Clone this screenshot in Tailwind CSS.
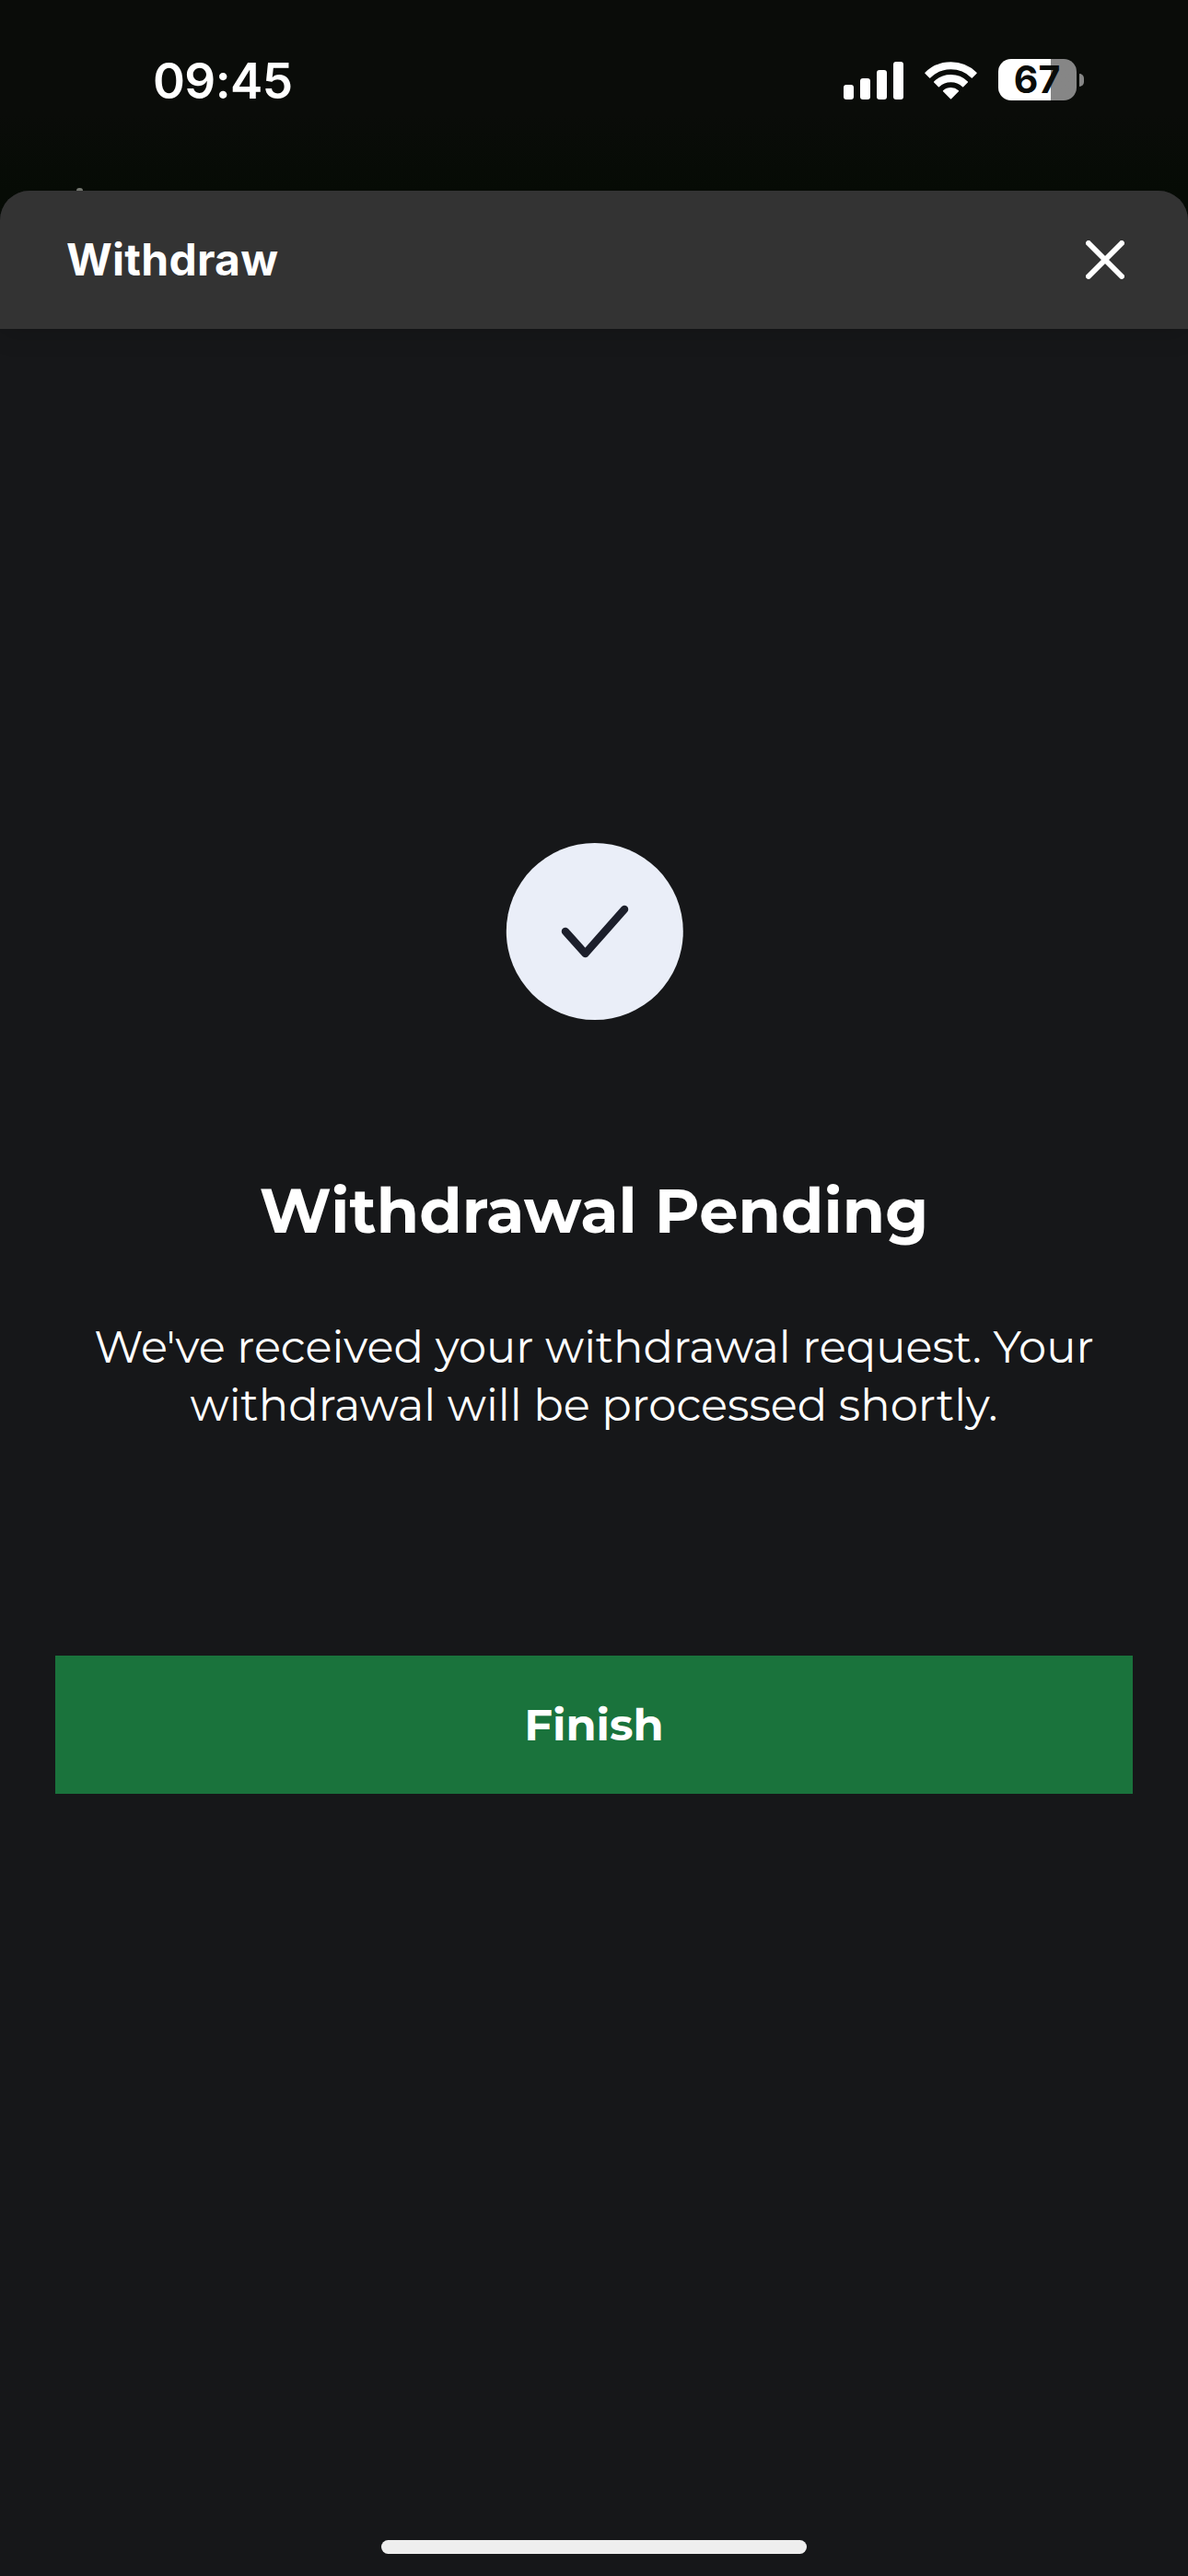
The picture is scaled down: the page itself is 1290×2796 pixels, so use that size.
<!doctype html>
<html lang="en">
<head>
  <meta charset="UTF-8" />
  <meta name="viewport" content="width=device-width, initial-scale=1.0" />
  <script src="https://cdn.jsdelivr.net/npm/@tailwindcss/browser@4"></script>
  <title>Withdraw</title>
</head>
<body class="bg-[#161719]">
  <div class="w-[1290px] h-[2796px] mx-auto flex flex-col overflow-hidden bg-[#060b05] text-white font-['Montserrat','Inter',sans-serif]">

    <!-- Status bar -->
    <div class="relative h-[207px] shrink-0 flex items-start justify-between pl-[166px] pr-[113px] pt-[57px] bg-linear-to-b from-[#0a0c09] from-60% to-[#060b05] font-['Inter',sans-serif]">
      <span class="h-[62px] leading-[62px] text-[53px] font-semibold tracking-[-0.6px]">09:45</span>
      <div class="flex items-center gap-[23px] h-[60px]">
        <svg class="w-[65px] h-[41px]" viewBox="0 0 65 41" fill="currentColor">
          <rect x="0" y="25" width="11" height="16" rx="3" />
          <rect x="18" y="18" width="11" height="23" rx="3" />
          <rect x="36" y="9" width="11" height="32" rx="3" />
          <rect x="54" y="0" width="11" height="41" rx="3" />
        </svg>
        <svg class="w-[57px] h-[42px] -mt-px" viewBox="0 0 57 42" fill="currentColor" stroke="currentColor" stroke-width="1.5" stroke-linejoin="round">
          <path d="M1 13.2 A39.3 39.3 0 0 1 56 13.2 L51.3 17.9 A32.6 32.6 0 0 0 5.7 17.9 Z" />
          <path d="M10.7 23 A25.6 25.6 0 0 1 46.3 23 L41.6 27.7 A19 19 0 0 0 15.4 27.7 Z" />
          <path d="M20.6 32.7 A12 12 0 0 1 36.4 32.7 L28.5 40.8 Z" />
        </svg>
        <div class="flex items-center gap-[3px] -mt-px">
          <div class="w-[85px] h-[45px] pr-px rounded-[14px] flex items-center justify-center bg-linear-to-r from-white from-67% to-[#868686] to-67% text-[#0a0c09] text-[41px] font-bold leading-none">67</div>
          <div class="w-[5px] h-[14px] rounded-r-full bg-[#868686]"></div>
        </div>
      </div>
      <!-- Top of the back arrow peeking out behind the sheet -->
      <div class="absolute left-[83px] bottom-0 w-[7px] h-[3px] rounded-t-full bg-[#73766f]"></div>
    </div>

    <!-- Withdraw sheet -->
    <div class="grow flex flex-col rounded-t-[32px] overflow-hidden bg-[#161719]">
      <div class="h-[150px] shrink-0 flex items-center justify-between pl-[72px] pr-[69px] bg-[#333333] shadow-[0_6px_24px_rgba(0,0,0,0.15)]">
        <h1 class="font-['Inter',sans-serif] text-[48px] leading-none font-bold tracking-[0.25px]">Withdraw</h1>
        <button type="button" aria-label="Close">
          <svg class="w-[42px] h-[42px]" viewBox="0 0 42 42" fill="none" stroke="currentColor" stroke-width="6" stroke-linecap="round">
            <path d="M3 3l36 36M39 3L3 39" />
          </svg>
        </button>
      </div>

      <div class="grow flex flex-col items-center px-[60px] pt-[558px]">
        <svg class="size-[193px] -mb-px" viewBox="0 0 193 193" fill="none" stroke="#1c1f2b" stroke-width="8.5" stroke-linecap="round" stroke-linejoin="round">
          <circle cx="96.8" cy="96" r="96" fill="#eaeef8" stroke="none" />
          <path d="M65 96l21.5 24L129 72" />
        </svg>
        <h2 class="mt-[165px] text-[67.1px] leading-[84px] font-bold">Withdrawal Pending</h2>
        <p class="mt-[75px] text-center text-[48px] leading-[63px] tracking-[-0.02px]">We've received your withdrawal request. Your<br>withdrawal will be processed shortly.</p>
        <button type="button" class="mt-[240px] w-full h-[150px] bg-[#1a733c] text-[48px] leading-none font-bold">Finish</button>
      </div>

      <!-- Home indicator -->
      <div class="w-[462px] h-[15px] mx-auto mb-[24px] rounded-full bg-[#eeeeee]"></div>
    </div>
  </div>
</body>
</html>
